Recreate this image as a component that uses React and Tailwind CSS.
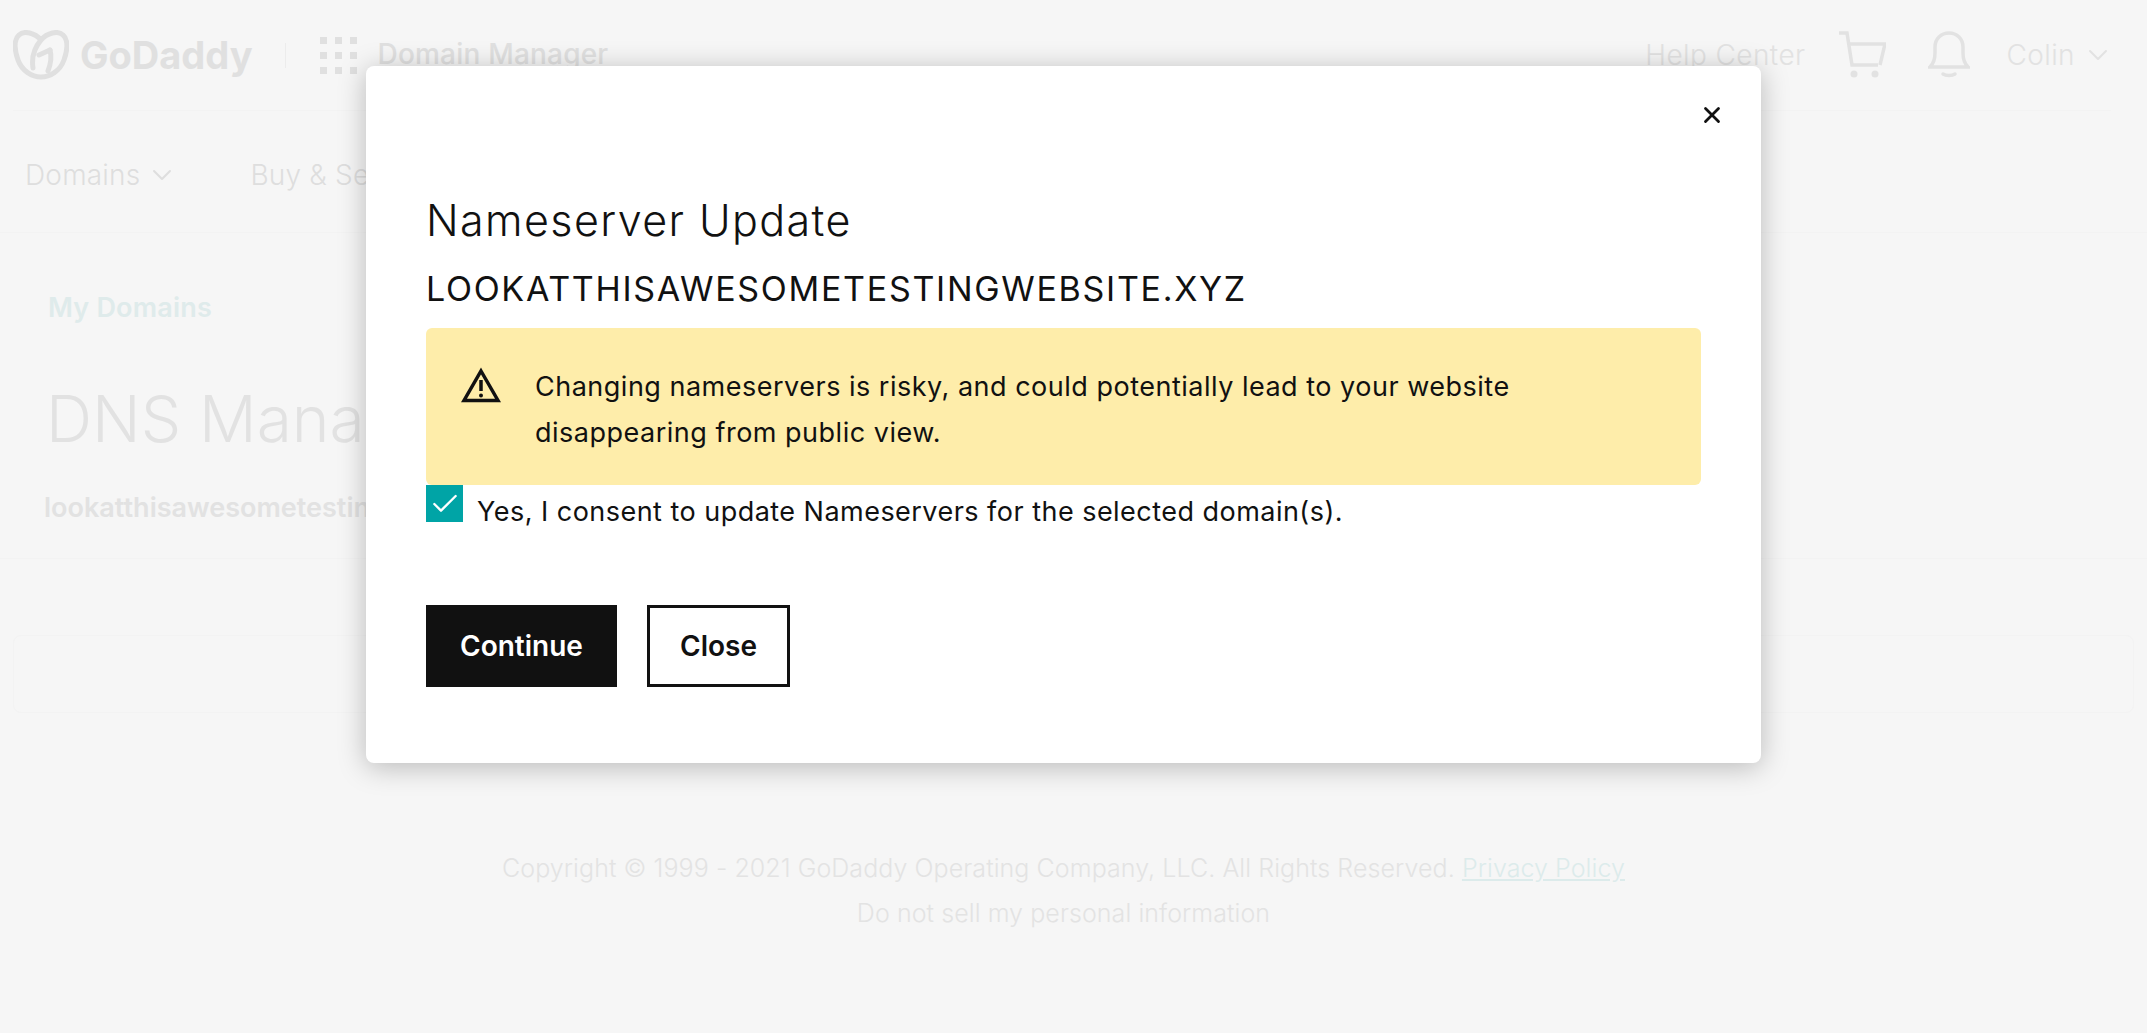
import React from "react";
import { X, ChevronDown, Check } from "lucide-react";

const font = { fontFamily: 'Inter, sans-serif' };

const Logo = () => (
  <svg width="56" height="50" viewBox="0 0 56 50" fill="none" stroke="#e0e0e0" strokeWidth="5" strokeLinecap="round" strokeLinejoin="round">
    <path d="M28 10C22 3 11 0 6 5C0 10 2 22 5 30C9 41 19 47 28 47C37 47 47 41 51 30C54 22 56 10 50 5C45 0 34 3 28 10C22 17 18 25 20 38" />
    <path d="M37 20C39 27 38 33 35 41" />
    <path d="M26 25L37 20" />
  </svg>
);

const GridIcon = () => (
  <div className="grid grid-cols-3 gap-[8px]">
    {[...Array(9)].map((_, i) => (
      <div key={i} className="w-[7px] h-[7px] bg-[#e0e0e0]" />
    ))}
  </div>
);

const CartIcon = () => (
  <svg width="48" height="48" viewBox="0 0 48 48" fill="none" stroke="#e2e2e2" strokeWidth="3.5">
    <path d="M1 2H9L14 34H40" />
    <path d="M10 13H47L42 34" />
    <circle cx="16" cy="43" r="3.5" fill="#e2e2e2" stroke="none" />
    <circle cx="37" cy="43" r="3.5" fill="#e2e2e2" stroke="none" />
  </svg>
);

const BellIcon = () => (
  <svg width="42" height="48" viewBox="0 0 42 48" fill="none" stroke="#e2e2e2" strokeWidth="3.5" strokeLinecap="round">
    <path d="M2 36H40C36 32 35 28 35 22V16C35 8 29 2 21 2C13 2 7 8 7 16V22C7 28 6 32 2 36Z" />
    <path d="M15 43C18 45 24 45 27 43" />
  </svg>
);

const WarningIcon = () => (
  <svg width="40" height="36" viewBox="0 0 40 36" fill="none" stroke="#111111" strokeWidth="3.5">
    <path d="M20 4L37 33.5H3Z" />
    <path d="M20 13V24" />
    <circle cx="20" cy="28.5" r="2" fill="#111111" stroke="none" />
  </svg>
);

export default function App() {
  return (
    <div className="relative h-[1033px] overflow-hidden bg-[#f6f6f6]" style={font}>
      {/* header */}
      <div className="ml-[13px] mr-9 h-[111px] border-b border-[#f3f3f3] flex items-center justify-between">
        <div className="flex items-center">
          <Logo />
          <span className="ml-[11px] text-[38px] font-bold tracking-[0px] text-[#e0e0e0]">GoDaddy</span>
          <div className="ml-[32px] h-[25px] w-px bg-[#ececec]" />
          <div className="ml-[34px]"><GridIcon /></div>
          <span className="ml-[21px] mb-[2px] text-[28px] font-medium tracking-[0.2px] text-[#e0e0e0]">Domain Manager</span>
        </div>
        <div className="flex items-center text-[28px] font-light tracking-[0.4px] text-[#e2e2e2]">
          <span>Help Center</span>
          <div className="ml-[33px]"><CartIcon /></div>
          <div className="ml-[42px]"><BellIcon /></div>
          <span className="ml-[36px]">Colin</span>
          <ChevronDown className="ml-[7px] -mr-[3px] w-8 h-8" strokeWidth={1.5} />
        </div>
      </div>

      {/* nav */}
      <div className="h-[122px] border-b border-[#f3f3f3] flex items-center pt-1.5 text-[28px] font-light tracking-[0.2px] text-[#dedede]">
        <div className="w-[366px] pl-[25px] flex items-center overflow-hidden whitespace-nowrap">
          <span>Domains</span>
          <ChevronDown className="ml-[6px] w-8 h-8 shrink-0" strokeWidth={1.5} />
          <span className="ml-[72px]">Buy &amp; Sell</span>
        </div>
      </div>

      {/* page title, runs on underneath the modal */}
      <div className="h-[326px] border-b border-[#f3f3f3]">
        <div className="w-[366px] pl-[48px] overflow-hidden whitespace-nowrap">
          <div className="pt-[57px] text-[27px] leading-[36px] font-semibold tracking-[0.2px] text-[#dfebeb]">My Domains</div>
          <div className="mt-[53px] -ml-0.5 text-[64px] leading-[80px] font-light text-[#e2e2e2]">DNS Management</div>
          <div className="-ml-1 mt-[31px] text-[27px] leading-[36px] font-semibold text-[#e2e2e2]">lookatthisawesometestingwebsite.xyz</div>
        </div>
      </div>

      <div className="mx-[13px] mt-[76px] h-[78px] rounded-lg border border-[#f3f3f3]" />

      {/* footer */}
      <div className="mt-[139px] pr-[20px] text-center text-[25px] leading-[32px] font-light tracking-[0.07px] text-[#e3e3e3]">
        <div>
          Copyright © 1999 - 2021 GoDaddy Operating Company, LLC. All Rights Reserved.{" "}
          <span className="text-[#dcebeb] underline">Privacy Policy</span>
        </div>
        <div className="mt-[13px]">Do not sell my personal information</div>
      </div>

      {/* modal */}
      <div className="absolute left-[366px] top-[66px] w-[1395px] h-[697px] rounded-lg bg-white shadow-[0_4px_28px_rgba(0,0,0,0.25)] text-[#111111]">
        <div className="flex justify-end pt-[36px] pr-[36px]">
          <X className="w-[26px] h-[26px]" strokeWidth={2.6} />
        </div>
        <div className="pl-[60px] pr-[60px] pt-[64px]">
          <h2 className="text-[43px] leading-[56px] font-light tracking-[1.4px]">Nameserver Update</h2>
          <div className="mt-[19px] text-[34px] leading-[44px] font-normal tracking-[1.7px]">LOOKATTHISAWESOMETESTINGWEBSITE.XYZ</div>
          <div className="mt-[17px] h-[157px] rounded-md bg-[#feedaa] flex pl-[35px] pt-[39px]">
            <WarningIcon />
            <p className="ml-[34px] w-[1000px] text-[27px] leading-[46px] tracking-[0.5px] -mt-[3px]">
              Changing nameservers is risky, and could potentially lead to your website disappearing from public view.
            </p>
          </div>
          <div className="flex items-start">
            <div className="w-[37px] h-[37px] bg-[#00a4a6] flex items-center justify-center">
              <Check className="w-8 h-8 text-white" strokeWidth={1.75} />
            </div>
            <span className="ml-[14px] mt-[7px] text-[27px] leading-[40px] tracking-[0.47px]">
              Yes, I consent to update Nameservers for the selected domain(s).
            </span>
          </div>
          <div className="mt-[73px] flex gap-[30px]">
            <button className="w-[191px] h-[82px] bg-[#111111] text-white text-[28px] font-semibold">Continue</button>
            <button className="w-[143px] h-[82px] border-[3px] border-[#111111] text-[28px] font-semibold">Close</button>
          </div>
        </div>
      </div>
    </div>
  );
}
